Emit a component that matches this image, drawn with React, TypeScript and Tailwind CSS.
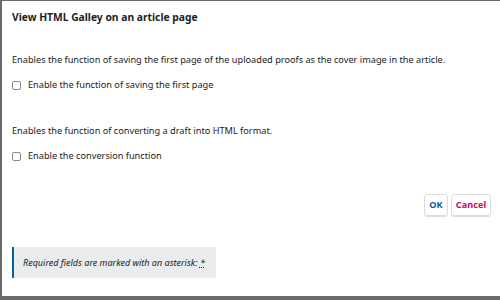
import React from "react";

export default function App() {
  return (
    <div className="w-[500px] h-[300px] bg-[#6b6b6b] overflow-hidden" style={{ fontFamily: '"Noto Sans", sans-serif' }}>
      <div className="ml-[2px] mt-[1px] h-[295px] bg-white flex flex-col text-[#222]">
        <div className="h-[33px] pl-[10px] flex items-center">
          <h1 className="text-[10.3px] font-bold leading-none">View HTML Galley on an article page</h1>
        </div>
        <div className="pl-[10px] pr-3 pt-[19px] flex flex-col">
          <p className="text-[9.2px] leading-[14px]">Enables the function of saving the first page of the uploaded proofs as the cover image in the article.</p>
          <label className="mt-[11px] flex items-center gap-[7px] text-[9.2px] leading-[14px]">
            <span className="w-[9px] h-[9px] border border-[#8a8a8a] rounded-[2px] bg-white" />
            <span>Enable the function of saving the first page</span>
          </label>
          <p className="mt-[32px] text-[9.2px] leading-[14px]">Enables the function of converting a draft into HTML format.</p>
          <label className="mt-[11px] flex items-center gap-[7px] text-[9.2px] leading-[14px]">
            <span className="w-[9px] h-[9px] border border-[#8a8a8a] rounded-[2px] bg-white" />
            <span>Enable the conversion function</span>
          </label>
        </div>
        <div className="mt-[31px] pr-[9px] flex justify-end gap-[3px]">
          <button className="h-[22px] w-[24px] border border-[#ddd] rounded-[3px] text-[9.2px] font-bold text-[#006798] shadow-[0_1px_0_#ddd] flex items-center justify-center">OK</button>
          <button className="h-[22px] w-[40px] border border-[#ddd] rounded-[3px] text-[9.2px] font-bold text-[#d00a6c] shadow-[0_1px_0_#ddd] flex items-center justify-center">Cancel</button>
        </div>
        <div className="mt-[31px] ml-[10px] w-[204px] h-[31px] bg-[#eaedee] border-l-2 border-[#006798] flex items-center pl-[9px]">
          <span className="text-[9px] italic whitespace-nowrap">Required fields are marked with an asterisk: <abbr className="underline decoration-dotted">*</abbr></span>
        </div>
      </div>
    </div>
  );
}
